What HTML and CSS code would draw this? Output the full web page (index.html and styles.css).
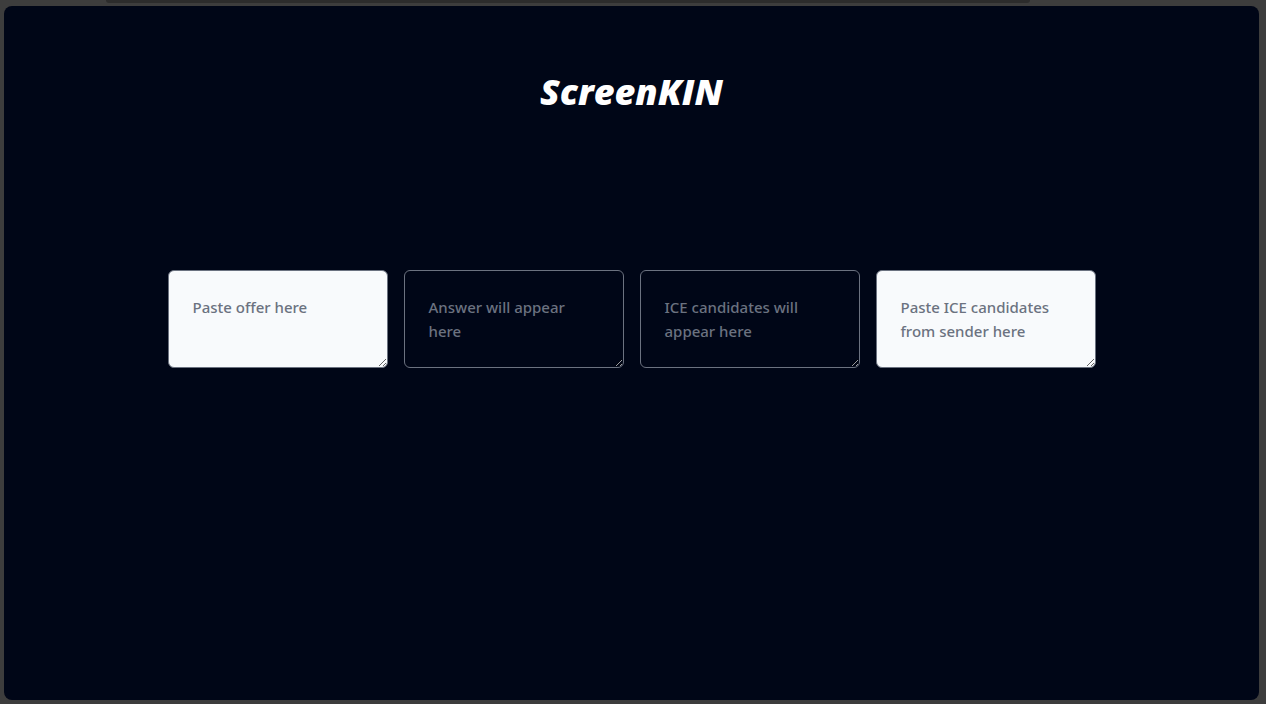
FILE: index.html
```html
<!DOCTYPE html>
<html lang="en">
<head>
<meta charset="utf-8">
<title>ScreenKIN</title>
<link rel="stylesheet" href="styles.css">
</head>
<body>
<div class="topstrip"></div>
<main class="panel">
  <h1 class="title">ScreenKIN</h1>
  <div class="fields">
    <textarea class="box light" placeholder="Paste offer here"></textarea>
    <textarea class="box dark" placeholder="Answer will appear here" readonly></textarea>
    <textarea class="box dark" placeholder="ICE candidates will appear here" readonly></textarea>
    <textarea class="box light" placeholder="Paste ICE candidates from sender here"></textarea>
  </div>
</main>
</body>
</html>
```
FILE: styles.css
```css
html, body {
  margin: 0;
  padding: 0;
  height: 100%;
}
body {
  background: #3d3d3d;
  font-family: "Noto Sans", "Open Sans", sans-serif;
  overflow: hidden;
}
.topstrip {
  height: 3px;
  margin: 0 236px 0 106px;
  background: #2c2c2c;
  border-radius: 0 0 4px 4px;
}
.panel {
  margin: 3px 7px 0 4px;
  height: 694px;
  background: #000617;
  border-radius: 8px;
  display: flex;
  flex-direction: column;
  align-items: center;
}
.title {
  margin: 64px 0 0 0;
  color: #ffffff;
  font-family: "Open Sans", sans-serif;
  font-style: italic;
  font-weight: 800;
  font-size: 36px;
  line-height: 44px;
  letter-spacing: 0;
}
.fields {
  margin-top: 156px;
  display: flex;
  gap: 16px;
}
.box {
  box-sizing: border-box;
  width: 220px;
  height: 98px;
  padding: 24px 26px 24px 24px;
  border-radius: 6px;
  border: 1px solid #6b7280;
  font-family: "Noto Sans", sans-serif;
  font-size: 15px;
  font-weight: 500;
  line-height: 24px;
  outline: none;
  resize: vertical;
}
.box.light {
  background: #f8fafc;
  color: #1f2937;
}
.box.dark {
  background: #000617;
  color: #e5e7eb;
}
.box::placeholder {
  color: #6b7280;
  opacity: 1;
}
```
